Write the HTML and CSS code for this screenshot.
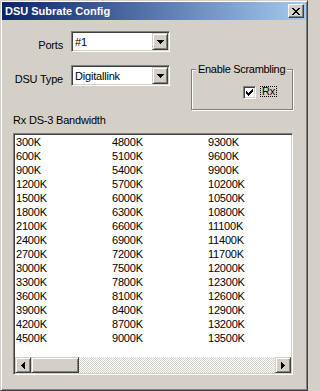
FILE: index.html
```html
<!DOCTYPE html>
<html>
<head>
<meta charset="utf-8">
<link rel="stylesheet" href="styles.css">
</head>
<body>
<div class="window">
  <div class="titlebar">
    <span class="title">DSU Subrate Config</span>
    <span class="close">
      <svg width="8" height="7" viewBox="0 0 8 7" shape-rendering="crispEdges"><path d="M0 0h2v1h-2zM6 0h2v1h-2zM1 1h2v1h-2zM5 1h2v1h-2zM2 2h4v1h-4zM3 3h2v1h-2zM2 4h4v1h-4zM1 5h2v1h-2zM5 5h2v1h-2zM0 6h2v1h-2zM6 6h2v1h-2z" fill="#000"/></svg>
    </span>
  </div>
  <div class="client">
    <div class="top">
      <div class="fields">
        <label class="flabel">Ports</label>
        <div class="combo">
          <span class="combo-text">#1</span>
          <span class="btn combo-btn"><svg width="7" height="4" viewBox="0 0 7 4" shape-rendering="crispEdges"><path d="M0 0h7v1h-7zM1 1h5v1h-5zM2 2h3v1h-3zM3 3h1v1h-1z" fill="#000"/></svg></span>
        </div>
        <label class="flabel">DSU Type</label>
        <div class="combo">
          <span class="combo-text">Digitallink</span>
          <span class="btn combo-btn"><svg width="7" height="4" viewBox="0 0 7 4" shape-rendering="crispEdges"><path d="M0 0h7v1h-7zM1 1h5v1h-5zM2 2h3v1h-3zM3 3h1v1h-1z" fill="#000"/></svg></span>
        </div>
      </div>
      <div class="group">
        <div class="legend">Enable Scrambling</div>
        <div class="check-row">
          <span class="checkbox"><svg width="9" height="9" viewBox="0 0 9 9" shape-rendering="crispEdges"><path d="M1 3h1v3h-1zM2 4h1v3h-1zM3 5h1v3h-1zM4 4h1v3h-1zM5 3h1v3h-1zM6 2h1v3h-1zM7 1h1v3h-1z" fill="#000"/></svg></span>
          <span class="check-label">Rx</span>
        </div>
      </div>
    </div>
    <div class="bw-label">Rx DS-3 Bandwidth</div>
    <div class="listbox">
      <div class="list">
        <div>300K</div><div>600K</div><div>900K</div><div>1200K</div><div>1500K</div><div>1800K</div><div>2100K</div><div>2400K</div><div>2700K</div><div>3000K</div><div>3300K</div><div>3600K</div><div>3900K</div><div>4200K</div><div>4500K</div>
        <div>4800K</div><div>5100K</div><div>5400K</div><div>5700K</div><div>6000K</div><div>6300K</div><div>6600K</div><div>6900K</div><div>7200K</div><div>7500K</div><div>7800K</div><div>8100K</div><div>8400K</div><div>8700K</div><div>9000K</div>
        <div>9300K</div><div>9600K</div><div>9900K</div><div>10200K</div><div>10500K</div><div>10800K</div><div>11100K</div><div>11400K</div><div>11700K</div><div>12000K</div><div>12300K</div><div>12600K</div><div>12900K</div><div>13200K</div><div>13500K</div>
      </div>
      <div class="hscroll">
        <span class="btn sbtn"><svg width="4" height="7" viewBox="0 0 4 7" shape-rendering="crispEdges"><path d="M3 0h1v7h-1zM2 1h1v5h-1zM1 2h1v3h-1zM0 3h1v1h-1z" fill="#000"/></svg></span>
        <span class="btn thumb"></span>
        <span class="track"></span>
        <span class="btn sbtn"><svg width="4" height="7" viewBox="0 0 4 7" shape-rendering="crispEdges"><path d="M0 0h1v7h-1zM1 1h1v5h-1zM2 2h1v3h-1zM3 3h1v1h-1z" fill="#000"/></svg></span>
      </div>
    </div>
  </div>
</div>
</body>
</html>
```

FILE: styles.css
```css
html, body {
  margin: 0;
  padding: 0;
  background: #d4d0c8;
}

body {
  font-family: "Liberation Sans", Arial, sans-serif;
  font-size: 11px;
  letter-spacing: -0.2px;
  color: #000;
}

.window {
  box-sizing: border-box;
  width: 308px;
  height: 391px;
  padding: 1px;
  background: #d4d0c8;
  border: 1px solid;
  border-color: #d4d0c8 #404040 #404040 #d4d0c8;
  box-shadow: inset 1px 1px #fff, inset -1px -1px #808080;
  display: flex;
  flex-direction: column;
}

.titlebar {
  height: 18px;
  display: flex;
  align-items: center;
  justify-content: space-between;
  padding: 0 2px 0 3px;
  background: linear-gradient(to right, #0a246a, #a6caf0);
}

.title {
  color: #fff;
  font-weight: bold;
  letter-spacing: 0;
  line-height: 18px;
}

.btn {
  box-sizing: border-box;
  display: flex;
  align-items: center;
  justify-content: center;
  background: #d4d0c8;
  border: 1px solid;
  border-color: #d4d0c8 #404040 #404040 #d4d0c8;
  box-shadow: inset 1px 1px #fff, inset -1px -1px #808080;
}

.close {
  box-sizing: border-box;
  width: 16px;
  height: 14px;
  display: flex;
  align-items: center;
  justify-content: center;
  background: #d4d0c8;
  border: 1px solid;
  border-color: #fff #404040 #404040 #fff;
  box-shadow: inset -1px -1px #808080;
}

.client {
  flex: 1;
  padding-left: 11px;
}

.top {
  display: flex;
  align-items: flex-start;
}

.fields {
  margin-top: 11px;
  display: grid;
  grid-template-columns: 50px 99px;
  grid-template-rows: 21px 21px;
  column-gap: 8px;
  row-gap: 13px;
}

.flabel {
  text-align: right;
  line-height: 13px;
  padding-top: 8px;
  white-space: nowrap;
}

.combo {
  box-sizing: border-box;
  width: 99px;
  height: 21px;
  padding: 1px;
  display: flex;
  background: #fff;
  border: 1px solid;
  border-color: #808080 #fff #fff #808080;
  box-shadow: inset 1px 1px #404040, inset -1px -1px #d4d0c8;
}

.combo-text {
  flex: 1;
  padding: 1px 0 0 2px;
  line-height: 16px;
}

.combo-btn {
  width: 16px;
  height: 17px;
}

.group {
  box-sizing: border-box;
  width: 102px;
  margin-top: 49px;
  margin-left: 21px;
  padding: 0 0 10px 0;
  border: 1px solid #808080;
  box-shadow: inset 1px 1px #fff, 1px 1px #fff;
  display: flex;
  flex-direction: column;
}

.legend {
  align-self: flex-start;
  margin: -7px 0 0 4px;
  padding: 0 2px;
  line-height: 13px;
  letter-spacing: -0.3px;
  background: #d4d0c8;
  white-space: nowrap;
}

.check-row {
  margin-top: 10px;
  padding-right: 15px;
  display: flex;
  justify-content: flex-end;
  align-items: flex-start;
  gap: 4px;
}

.checkbox {
  box-sizing: border-box;
  width: 13px;
  height: 13px;
  display: flex;
  align-items: center;
  justify-content: center;
  background: #fff;
  border: 1px solid;
  border-color: #808080 #fff #fff #808080;
  box-shadow: inset 1px 1px #404040, inset -1px -1px #d4d0c8;
}

.check-label {
  box-sizing: border-box;
  height: 11px;
  padding: 0 1px;
  line-height: 9px;
  border: 1px dotted #000;
}

.bw-label {
  margin-top: 4px;
  line-height: 13px;
}

.listbox {
  box-sizing: border-box;
  width: 280px;
  height: 242px;
  margin-top: 6px;
  padding: 1px;
  display: flex;
  flex-direction: column;
  background: #fff;
  border: 1px solid;
  border-color: #808080 #fff #fff #808080;
  box-shadow: inset 1px 1px #404040, inset -1px -1px #d4d0c8;
}

.list {
  flex: 1;
  overflow: hidden;
  padding: 0 0 0 1px;
  display: grid;
  grid-auto-flow: column;
  grid-template-rows: repeat(15, 14px);
  grid-template-columns: repeat(3, 96px);
  line-height: 14px;
  white-space: nowrap;
  align-content: start;
}

.hscroll {
  height: 16px;
  display: flex;
}

.sbtn {
  width: 16px;
  height: 16px;
}

.thumb {
  width: 48px;
  height: 16px;
}

.track {
  flex: 1;
  background-image: conic-gradient(#fff 25%, #d4d0c8 0 50%, #fff 0 75%, #d4d0c8 0);
  background-size: 2px 2px;
}
```
